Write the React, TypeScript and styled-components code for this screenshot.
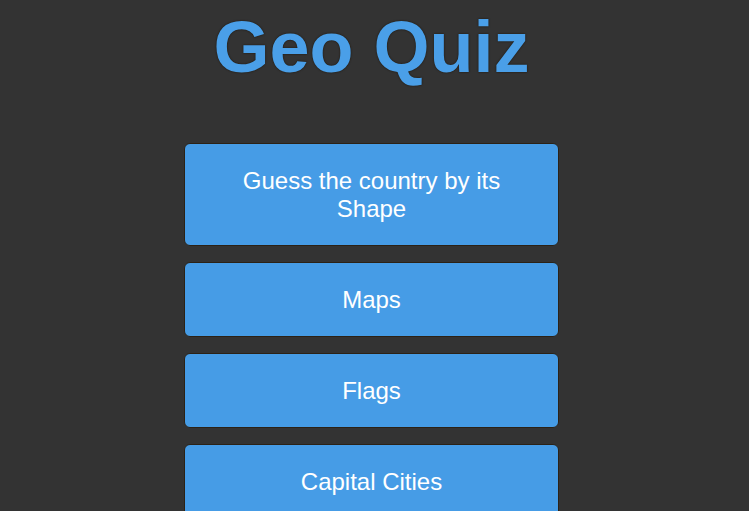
import React from "react";
import styled, { createGlobalStyle } from "styled-components";

const GlobalStyle = createGlobalStyle`
    html, body {
        margin: 0;
        padding: 0;
        background: #333333;
    }
    body {
        font-family: 'Liberation Sans', Arial, sans-serif;
    }
`;

const Page = styled.div`
    display: flex;
    flex-direction: column;
    align-items: center;
    padding: 6px 6px 0 0;
    min-height: 100vh;
    box-sizing: border-box;
`;

const Title = styled.h1`
    margin: 0;
    color: #4a9fe8;
    font-size: 72px;
    font-weight: 700;
    line-height: normal;
    text-shadow: 0 0 2px #1a1005;
`;

const Menu = styled.div`
    display: flex;
    flex-direction: column;
    gap: 16px;
    width: 375px;
    margin-top: 55px;
`;

const QuizButton = styled.button`
    box-sizing: border-box;
    width: 100%;
    padding: 23px 24px 22px;
    border: 1px solid #2b2217;
    border-radius: 6px;
    background: #469ce6;
    color: #ffffff;
    font-family: 'Liberation Sans', Arial, sans-serif;
    font-size: 24px;
    line-height: 28px;
    text-align: center;
    cursor: pointer;
`;

const quizzes = ["Guess the country by its Shape", "Maps", "Flags", "Capital Cities"];

const App = () => {
    return (
        <>
            <GlobalStyle />
            <Page>
                <Title>Geo Quiz</Title>
                <Menu>
                    {quizzes.map((q) => (
                        <QuizButton key={q}>{q}</QuizButton>
                    ))}
                </Menu>
            </Page>
        </>
    );
};

export default App;
